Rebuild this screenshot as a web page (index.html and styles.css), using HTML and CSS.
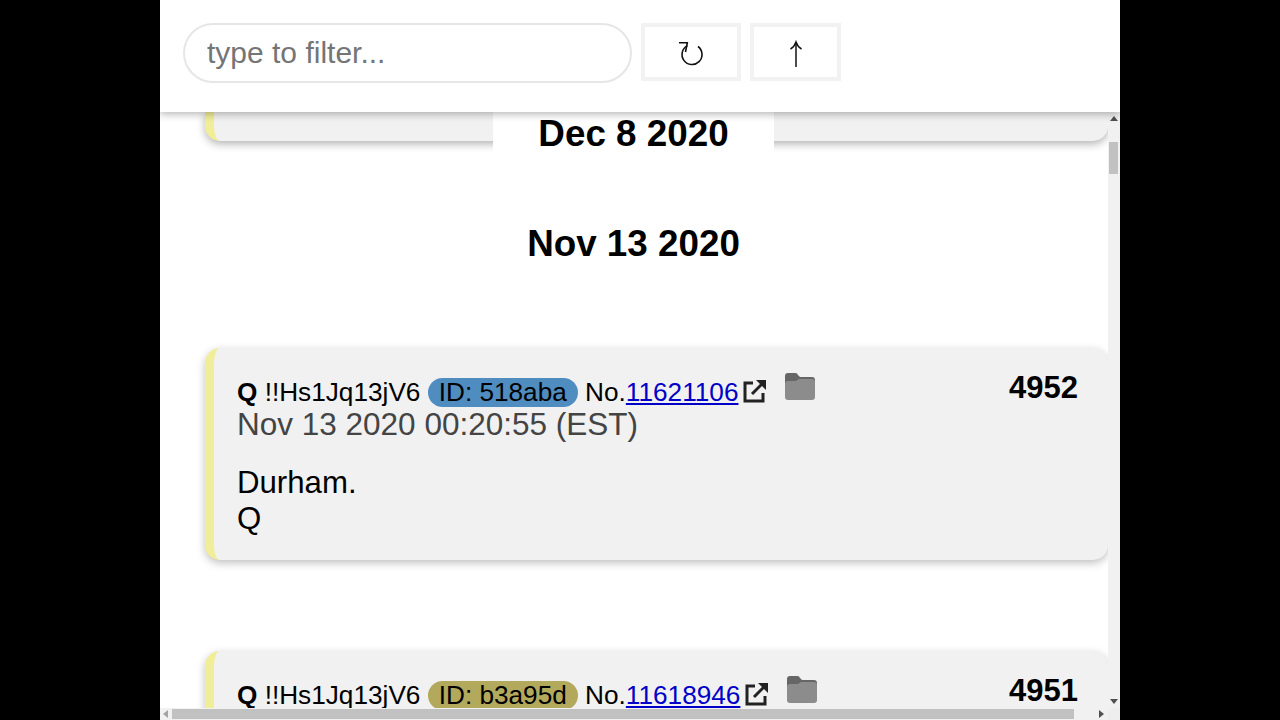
FILE: index.html
```html
<!DOCTYPE html>
<html lang="en">
<head>
<meta charset="utf-8">
<title>Q posts</title>
<link rel="stylesheet" href="styles.css">
</head>
<body>
<div class="app">
  <header class="topbar">
    <input class="filter" type="text" placeholder="type to filter...">
    <button class="btn btn-reload" aria-label="reload"><svg class="btn-icon" viewBox="0 0 26 30"><path d="M20 9.500A10 10 0 1 1 9.500 8.600" fill="none" stroke="#111" stroke-width="1.600"/><path d="M1 5.700H9.300L7.500 15" fill="none" stroke="#111" stroke-width="1.600"/></svg></button>
    <button class="btn btn-up" aria-label="top"><svg class="btn-icon" viewBox="0 -3 26 30"><path d="M13 28.500V2" fill="none" stroke="#111" stroke-width="1.500"/><path d="M7.500 9C10 7.500 12 5 13 2c1 3 3 5.500 5.500 7" fill="none" stroke="#111" stroke-width="1.500"/></svg></button>
  </header>
  <div class="viewport">
    <main class="scroller">
      <div class="stub"></div>
      <div class="date-sticky">Dec 8 2020</div>
      <h2 class="date">Nov 13 2020</h2>
      <article class="card">
        <div class="num">4952</div>
        <div class="meta">
          <b class="author">Q</b> !!Hs1Jq13jV6 <span class="pill pill-blue">ID: 518aba</span> No.<a href="#">11621106</a><svg class="ext" viewBox="0 0 24 24"><path d="M10 4H2v18h18v-8" fill="none" stroke="#222" stroke-width="3"/><path d="M9 15 20 4" fill="none" stroke="#222" stroke-width="3"/><path d="M13 1h10v10z" fill="#222"/></svg><svg class="folder" viewBox="0 0 30 27"><path d="M0 3a3 3 0 0 1 3-3h7a3 3 0 0 1 3 2l2 2h12a3 3 0 0 1 3 3v6H0z" fill="#666"/><path d="M0 11a3 3 0 0 1 3-3h8l3-2h13a3 3 0 0 1 3 3v15a3 3 0 0 1-3 3H3a3 3 0 0 1-3-3z" fill="#8c8c8c"/></svg>
        </div>
        <div class="time">Nov 13 2020 00:20:55 (EST)</div>
        <p class="body">Durham.<br>Q</p>
      </article>
      <article class="card">
        <div class="num">4951</div>
        <div class="meta">
          <b class="author">Q</b> !!Hs1Jq13jV6 <span class="pill pill-olive">ID: b3a95d</span> No.<a href="#">11618946</a><svg class="ext" viewBox="0 0 24 24"><path d="M10 4H2v18h18v-8" fill="none" stroke="#222" stroke-width="3"/><path d="M9 15 20 4" fill="none" stroke="#222" stroke-width="3"/><path d="M13 1h10v10z" fill="#222"/></svg><svg class="folder" viewBox="0 0 30 27"><path d="M0 3a3 3 0 0 1 3-3h7a3 3 0 0 1 3 2l2 2h12a3 3 0 0 1 3 3v6H0z" fill="#666"/><path d="M0 11a3 3 0 0 1 3-3h8l3-2h13a3 3 0 0 1 3 3v15a3 3 0 0 1-3 3H3a3 3 0 0 1-3-3z" fill="#8c8c8c"/></svg>
        </div>
      </article>
    </main>
    <div class="vbar">
      <svg class="arrow" viewBox="0 0 8 5"><path d="M4 0 8 5H0z" fill="#505050"/></svg>
      <div class="vthumb"></div>
      <svg class="arrow arrow-end" viewBox="0 0 8 5"><path d="M4 5 8 0H0z" fill="#505050"/></svg>
    </div>
    <div class="hbar">
      <svg class="harrow" viewBox="0 0 5 8"><path d="M0 4 5 0v8z" fill="#a3a3a3"/></svg>
      <div class="hthumb"></div>
      <svg class="harrow harrow-end" viewBox="0 0 5 8"><path d="M5 4 0 0v8z" fill="#505050"/></svg>
    </div>
    <div class="corner"></div>
  </div>
</div>
</body>
</html>
```
FILE: styles.css
```css
* { box-sizing: border-box; }
html, body { margin: 0; height: 100%; }
body {
  background: #000;
  display: flex;
  justify-content: center;
  overflow: hidden;
  font-family: "Liberation Sans", Arial, sans-serif;
}
.app {
  width: 960px;
  height: 720px;
  background: #fff;
  display: flex;
  flex-direction: column;
}
.topbar {
  height: 112px;
  flex: none;
  display: flex;
  align-items: flex-start;
  padding: 23px 0 0 23px;
  background: #fff;
  box-shadow: 0 2px 8px rgba(0,0,0,.3);
  position: relative;
  z-index: 3;
}
.filter {
  width: 449px;
  height: 60px;
  border: 2px solid #e6e6e6;
  border-radius: 30px;
  padding: 0 22px;
  font: 30px "Liberation Sans", Arial, sans-serif;
  outline: none;
  background: #fff;
}
.filter::placeholder { color: #757575; opacity: 1; }
.btn {
  height: 58px;
  border: 4px solid #f2f2f2;
  background: #fff;
  padding: 0;
  display: flex;
  align-items: center;
  justify-content: center;
}
.btn-icon { width: 26px; height: 30px; }
.btn-reload { width: 100px; margin-left: 9px; }
.btn-up { width: 91px; margin-left: 9px; }
.viewport {
  flex: 1;
  min-height: 0;
  display: grid;
  grid-template-columns: 948px 12px;
  grid-template-rows: 596px 12px;
}
.scroller {
  overflow: hidden;
  position: relative;
}
.stub {
  height: 29px;
  margin-left: 45px;
  width: 903px;
  background: #f1f1f1;
  border-left: 9px solid #f0ee98;
  border-radius: 0 0 15px 15px;
  box-shadow: 0 3px 8px rgba(0,0,0,.3);
}
.date-sticky {
  position: absolute;
  top: 0;
  left: 333px;
  width: 281px;
  height: 43px;
  background: #fff;
  text-align: center;
  font-size: 36.800px;
  font-weight: 700;
  line-height: 43px;
  color: #000;
}
.date {
  margin: 81px 0 0;
  height: 126px;
  text-align: center;
  width: 947px;
  font-size: 36.800px;
  font-weight: 700;
  line-height: 43px;
  color: #000;
}
.card {
  margin-left: 45px;
  width: 903px;
  height: 212px;
  margin-bottom: 91px;
  padding: 25px 30px 0 23px;
  background: #f1f1f1;
  border-left: 9px solid #f0ee98;
  border-radius: 15px;
  box-shadow: 0 3px 8px rgba(0,0,0,.25);
  color: #000;
}
.num {
  float: right;
  margin-top: 2px;
  font-size: 31px;
  font-weight: 700;
  line-height: 26px;
}
.meta {
  font-size: 26.200px;
  line-height: 35px;
  height: 35px;
  white-space: nowrap;
}
.meta a { color: #0000c8; }
.author { font-weight: 700; }
.pill {
  display: inline-block;
  padding: 0 11px;
  border-radius: 15px;
  line-height: 29px;
}
.pill-blue { background: #4f8cc0; }
.pill-olive { background: #b3a95d; }
.ext { width: 24px; height: 24px; margin-left: 5px; vertical-align: -2px; }
.folder { width: 30px; height: 27px; margin-left: 18px; vertical-align: 1px; }
.time {
  font-size: 31.500px;
  line-height: 32px;
  color: #444;
}
.body {
  margin: 25px 0 0;
  font-size: 31.200px;
  line-height: 36px;
}
.vbar {
  background: #f1f1f1;
  display: flex;
  flex-direction: column;
  align-items: center;
}
.arrow { width: 8px; height: 5px; margin-top: 4px; flex: none; }
.arrow-end { margin: auto 0 4px; }
.vthumb { width: 9px; height: 32px; margin: 21px 0 0 1px; align-self: flex-start; background: #c1c1c1; }
.hbar {
  background: #f1f1f1;
  display: flex;
  align-items: center;
}
.harrow { width: 5px; height: 8px; margin-left: 3px; flex: none; }
.harrow-end { margin: 0 4px 0 auto; }
.hthumb { width: 902px; height: 10px; margin-left: 4px; background: #c1c1c1; }
.corner { background: #eee; }
```
